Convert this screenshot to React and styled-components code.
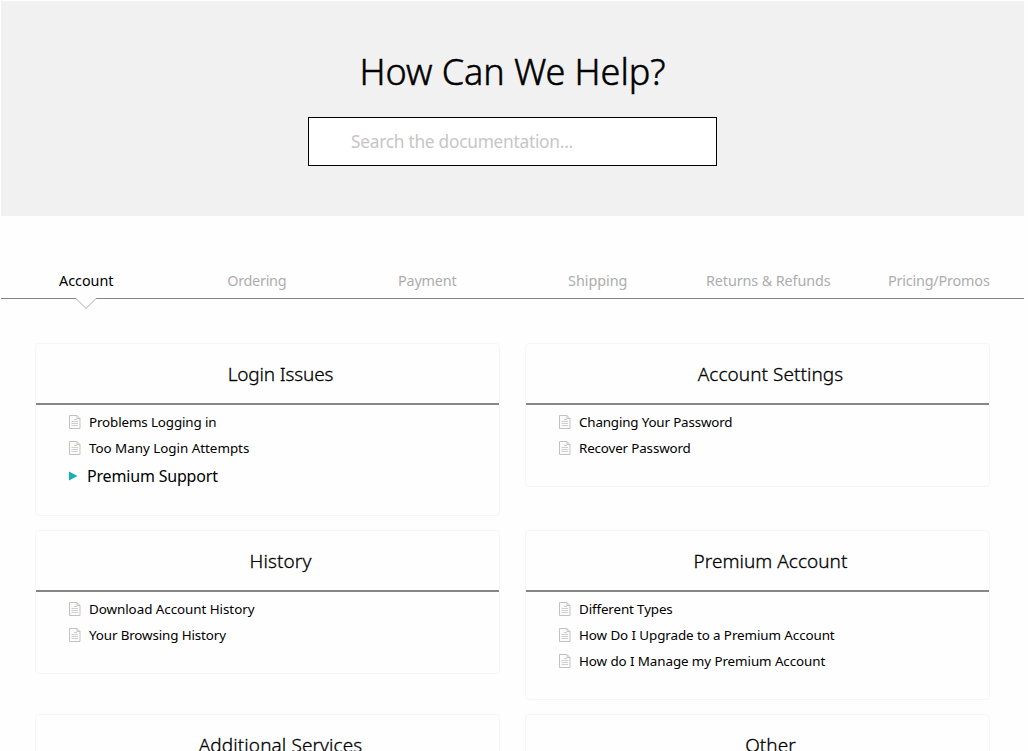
import React from 'react';
import styled, { createGlobalStyle } from 'styled-components';

const GlobalStyle = createGlobalStyle`
  * { box-sizing: border-box; }
  body {
    margin: 0;
    background: #fff;
    color: #000;
    font-family: "Noto Sans", "Open Sans", sans-serif;
  }
`;

const Page = styled.div`
  width: 1028px;
  height: 751px;
  padding: 1px 4px 0 1px;
  overflow: hidden;
  background: #fefefe;
`;

const Hero = styled.header`
  display: flex;
  flex-direction: column;
  align-items: center;
  height: 215px;
  padding-top: 46px;
  background: #f1f1f1;
`;

const Title = styled.h1`
  margin: 0 0 20px;
  font-size: 36px;
  font-weight: 300;
  line-height: 50px;
  letter-spacing: -0.08px;
  -webkit-text-stroke: 0.5px #000;
`;

const SearchBox = styled.input`
  width: 409px;
  height: 49px;
  padding: 0 42px;
  border: 1px solid #000;
  border-radius: 0;
  outline: 0;
  background: #fff;
  font-family: inherit;
  font-size: 17.3px;
  letter-spacing: -0.25px;
  &::placeholder { color: #c6c6c6; opacity: 1; }
`;

const Tabs = styled.nav`
  display: grid;
  grid-template-columns: repeat(6, 1fr);
  height: 83px;
  padding-top: 55px;
  border-bottom: 1px solid #858585;
`;

const Tab = styled.a`
  position: relative;
  height: 27px;
  color: ${(p) => (p.$active ? '#000' : '#adadad')};
  font-size: 14.4px;
  line-height: 20px;
  letter-spacing: ${(p) => (p.$tracking || 0) - 0.05}px;
  text-align: center;
`;

const Notch = styled.svg`
  position: absolute;
  left: 50%;
  bottom: -12px;
  width: 22px;
  height: 12px;
  margin-left: -11px;
`;

const Grid = styled.main`
  display: grid;
  grid-template-columns: 465px 465px;
  gap: 14px 25px;
  align-items: start;
  padding: 44px 0 0 34px;
`;

const Card = styled.section`
  padding-bottom: 25px;
  border: 1px solid #f6f6f6;
  border-radius: 4px;
`;

const CardTitle = styled.h2`
  height: 61px;
  margin: 0;
  padding: 16px 0 0 26px;
  border-bottom: 2px solid #868686;
  font-size: 19px;
  font-weight: 300;
  line-height: 28px;
  letter-spacing: ${(p) => p.$tracking - 0.05}px;
  text-align: center;
  -webkit-text-stroke: 0.3px #000;
`;

const Links = styled.ul`
  margin: 0;
  padding: 4px 0 0 33px;
  list-style: none;
`;

const Article = styled.li`
  display: flex;
  align-items: center;
  gap: 8px;
  height: 26px;
  font-size: 13.4px;
  letter-spacing: ${(p) => p.$tracking - 0.05}px;
  white-space: nowrap;
`;

const Category = styled(Article)`
  gap: 9px;
  height: 29px;
  font-size: 16px;
`;

function DocIcon() {
  return (
    <svg width="12" height="14" viewBox="0 0 12 14" fill="none" stroke="#c2c2bf">
      <path d="M.5.5h7.5l3 3v10H.5z" fill="#fbfbfb" />
      <path d="M8 .5v3h3" />
      <path d="M5 4.5h3M2.5 6.5h6.5M2.5 8.5h6.5M2.5 10.5h6.5" stroke="#cfcfcf" />
    </svg>
  );
}

function ArrowIcon() {
  return (
    <svg width="9" height="10" viewBox="0 0 9 10">
      <path d="M0 .5v9l8.5-4.5z" fill="#13b0b5" />
    </svg>
  );
}

const tabs = [
  ['Account', 0],
  ['Ordering', -0.22],
  ['Payment', -0.12],
  ['Shipping', 0],
  ['Returns & Refunds', -0.06],
  ['Pricing/Promos', -0.13],
];

const cards = [
  {
    title: 'Login Issues',
    tracking: -0.1,
    links: [['Problems Logging in', -0.08], ['Too Many Login Attempts', 0.03]],
    category: 'Premium Support',
  },
  {
    title: 'Account Settings',
    tracking: 0.1,
    links: [['Changing Your Password', -0.12], ['Recover Password', -0.1]],
  },
  {
    title: 'History',
    tracking: 0.15,
    links: [['Download Account History', 0], ['Your Browsing History', -0.08]],
  },
  {
    title: 'Premium Account',
    tracking: 0.08,
    links: [
      ['Different Types', -0.08],
      ['How Do I Upgrade to a Premium Account', -0.04],
      ['How do I Manage my Premium Account', -0.04],
    ],
  },
  { title: 'Additional Services', tracking: 0.15, links: [] },
  { title: 'Other', tracking: 0.1, links: [] },
];

export default function App() {
  return (
    <Page>
      <GlobalStyle />
      <Hero>
        <Title>How Can We Help?</Title>
        <SearchBox placeholder="Search the documentation..." />
      </Hero>
      <Tabs>
        {tabs.map(([label, tracking], i) => (
          <Tab key={label} $active={i === 0} $tracking={tracking}>
            {label}
            {i === 0 && (
              <Notch viewBox="0 0 22 12">
                <path d="M1 0h20v.5L11 10.5 1 .5z" fill="#fefefe" />
                <path d="M1 .5l10 10 10-10" fill="none" stroke="#aaa" />
              </Notch>
            )}
          </Tab>
        ))}
      </Tabs>
      <Grid>
        {cards.map((card) => (
          <Card key={card.title}>
            <CardTitle $tracking={card.tracking}>{card.title}</CardTitle>
            <Links>
              {card.links.map(([label, tracking]) => (
                <Article key={label} $tracking={tracking}>
                  <DocIcon />
                  {label}
                </Article>
              ))}
              {card.category && (
                <Category $tracking={-0.13}>
                  <ArrowIcon />
                  {card.category}
                </Category>
              )}
            </Links>
          </Card>
        ))}
      </Grid>
    </Page>
  );
}
